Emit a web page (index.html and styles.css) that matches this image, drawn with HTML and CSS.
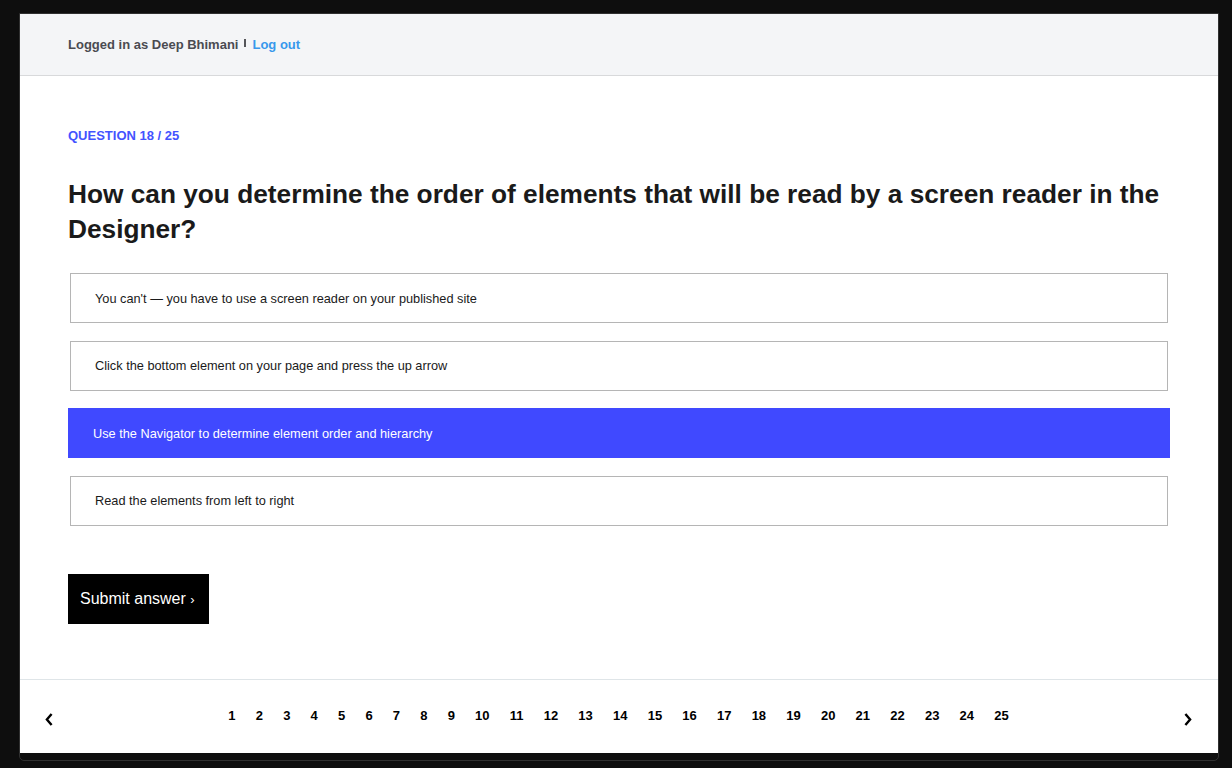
FILE: index.html
```html
<!DOCTYPE html>
<html lang="en">
<head>
<meta charset="utf-8">
<title>Quiz — Question 18 / 25</title>
<link rel="stylesheet" href="styles.css">
</head>
<body>
<div class="frame">
  <div class="page">
    <header class="topbar">
      <span class="user">Logged in as Deep Bhimani</span>
      <span class="sep"></span>
      <a class="logout" href="#">Log out</a>
    </header>

    <main class="quiz">
      <div class="label">QUESTION 18 / 25</div>
      <h1 class="title">How can you determine the order of elements that will be read by a screen reader in the Designer?</h1>

      <div class="options">
        <div class="option">You can't — you have to use a screen reader on your published site</div>
        <div class="option">Click the bottom element on your page and press the up arrow</div>
        <div class="option selected">Use the Navigator to determine element order and hierarchy</div>
        <div class="option">Read the elements from left to right</div>
      </div>

      <button class="submit">Submit answer <span class="chev">›</span></button>
    </main>

    <footer class="pager">
      <button class="arrow" aria-label="Previous">
        <svg width="8" height="13" viewBox="0 0 8 13"><path d="M6.6 1 L1.9 6.5 L6.6 12" fill="none" stroke="#000" stroke-width="2.4" stroke-linejoin="miter"/></svg>
      </button>
      <ol class="pages">
        <li>1</li><li>2</li><li>3</li><li>4</li><li>5</li><li>6</li><li>7</li><li>8</li><li>9</li><li>10</li>
        <li>11</li><li>12</li><li>13</li><li>14</li><li>15</li><li>16</li><li>17</li><li>18</li><li>19</li><li>20</li>
        <li>21</li><li>22</li><li>23</li><li>24</li><li>25</li>
      </ol>
      <button class="arrow" aria-label="Next">
        <svg width="8" height="13" viewBox="0 0 8 13"><path d="M1.4 1 L6.1 6.5 L1.4 12" fill="none" stroke="#000" stroke-width="2.4" stroke-linejoin="miter"/></svg>
      </button>
    </footer>
  </div>
</div>
</body>
</html>
```

FILE: styles.css
```css
* { box-sizing: border-box; }

html, body {
  margin: 0;
  padding: 0;
  background: #0e0e0e;
}

body {
  padding: 13px 0 0 19px;
  font-family: "Liberation Sans", Arial, Helvetica, sans-serif;
  color: #1a1a1a;
}

.frame {
  width: 1200px;
  height: 748px;
  border: 1px solid #303030;
  border-radius: 0 0 5px 5px;
  background: #0e0e0e;
  overflow: hidden;
}

.page {
  height: 739px;
  background: #ffffff;
  display: flex;
  flex-direction: column;
}

/* Header */
.topbar {
  height: 62px;
  flex: none;
  background: #f4f5f7;
  border-bottom: 1px solid #d8d9db;
  display: flex;
  align-items: center;
  padding: 0 48px;
  font-size: 13px;
  font-weight: 700;
}

.user {
  color: #4a4b51;
}

.sep {
  display: inline-block;
  width: 2px;
  height: 8px;
  background: #555559;
  margin: 0 6px 3px 6px;
}

.logout {
  color: #3898ec;
  text-decoration: none;
}

/* Main */
.quiz {
  flex: 1;
  padding: 52px 48px 0;
}

.label {
  font-size: 13px;
  line-height: 16px;
  font-weight: 700;
  color: #4353ff;
}

.title {
  margin: 33px 0 0;
  font-size: 26.25px;
  line-height: 35px;
  font-weight: 700;
  color: #1a1a1a;
}

.options {
  margin-top: 26px;
  display: flex;
  flex-direction: column;
  gap: 17.5px;
}

.option {
  height: 50px;
  margin: 0 2px;
  padding: 0 24px;
  border: 1px solid #b5b5b5;
  display: flex;
  align-items: center;
  font-size: 12.75px;
  color: #1a1a1a;
  background: #ffffff;
}

.option.selected {
  margin: 0;
  background: #4049ff;
  border-color: #4049ff;
  color: #ffffff;
}

.submit {
  margin-top: 48.5px;
  height: 50px;
  padding: 0 14px 0 12px;
  border: 0;
  background: #000000;
  color: #ffffff;
  font-family: inherit;
  font-size: 16px;
  cursor: pointer;
}

.chev {
  font-size: 13px;
}

/* Footer pagination */
.pager {
  height: 74px;
  flex: none;
  border-top: 1px solid #dfe5e8;
  display: flex;
  align-items: center;
  padding: 0 26px 0 25px;
}

.arrow {
  border: 0;
  background: none;
  padding: 0;
  margin-top: 6px;
  width: 8px;
  height: 13px;
  display: flex;
  cursor: pointer;
}

.pages {
  flex: 1;
  list-style: none;
  margin: 0 0 2px;
  padding: 0;
  display: flex;
  justify-content: center;
  gap: 20.2px;
  font-size: 13px;
  font-weight: 700;
  color: #000000;
}
```
